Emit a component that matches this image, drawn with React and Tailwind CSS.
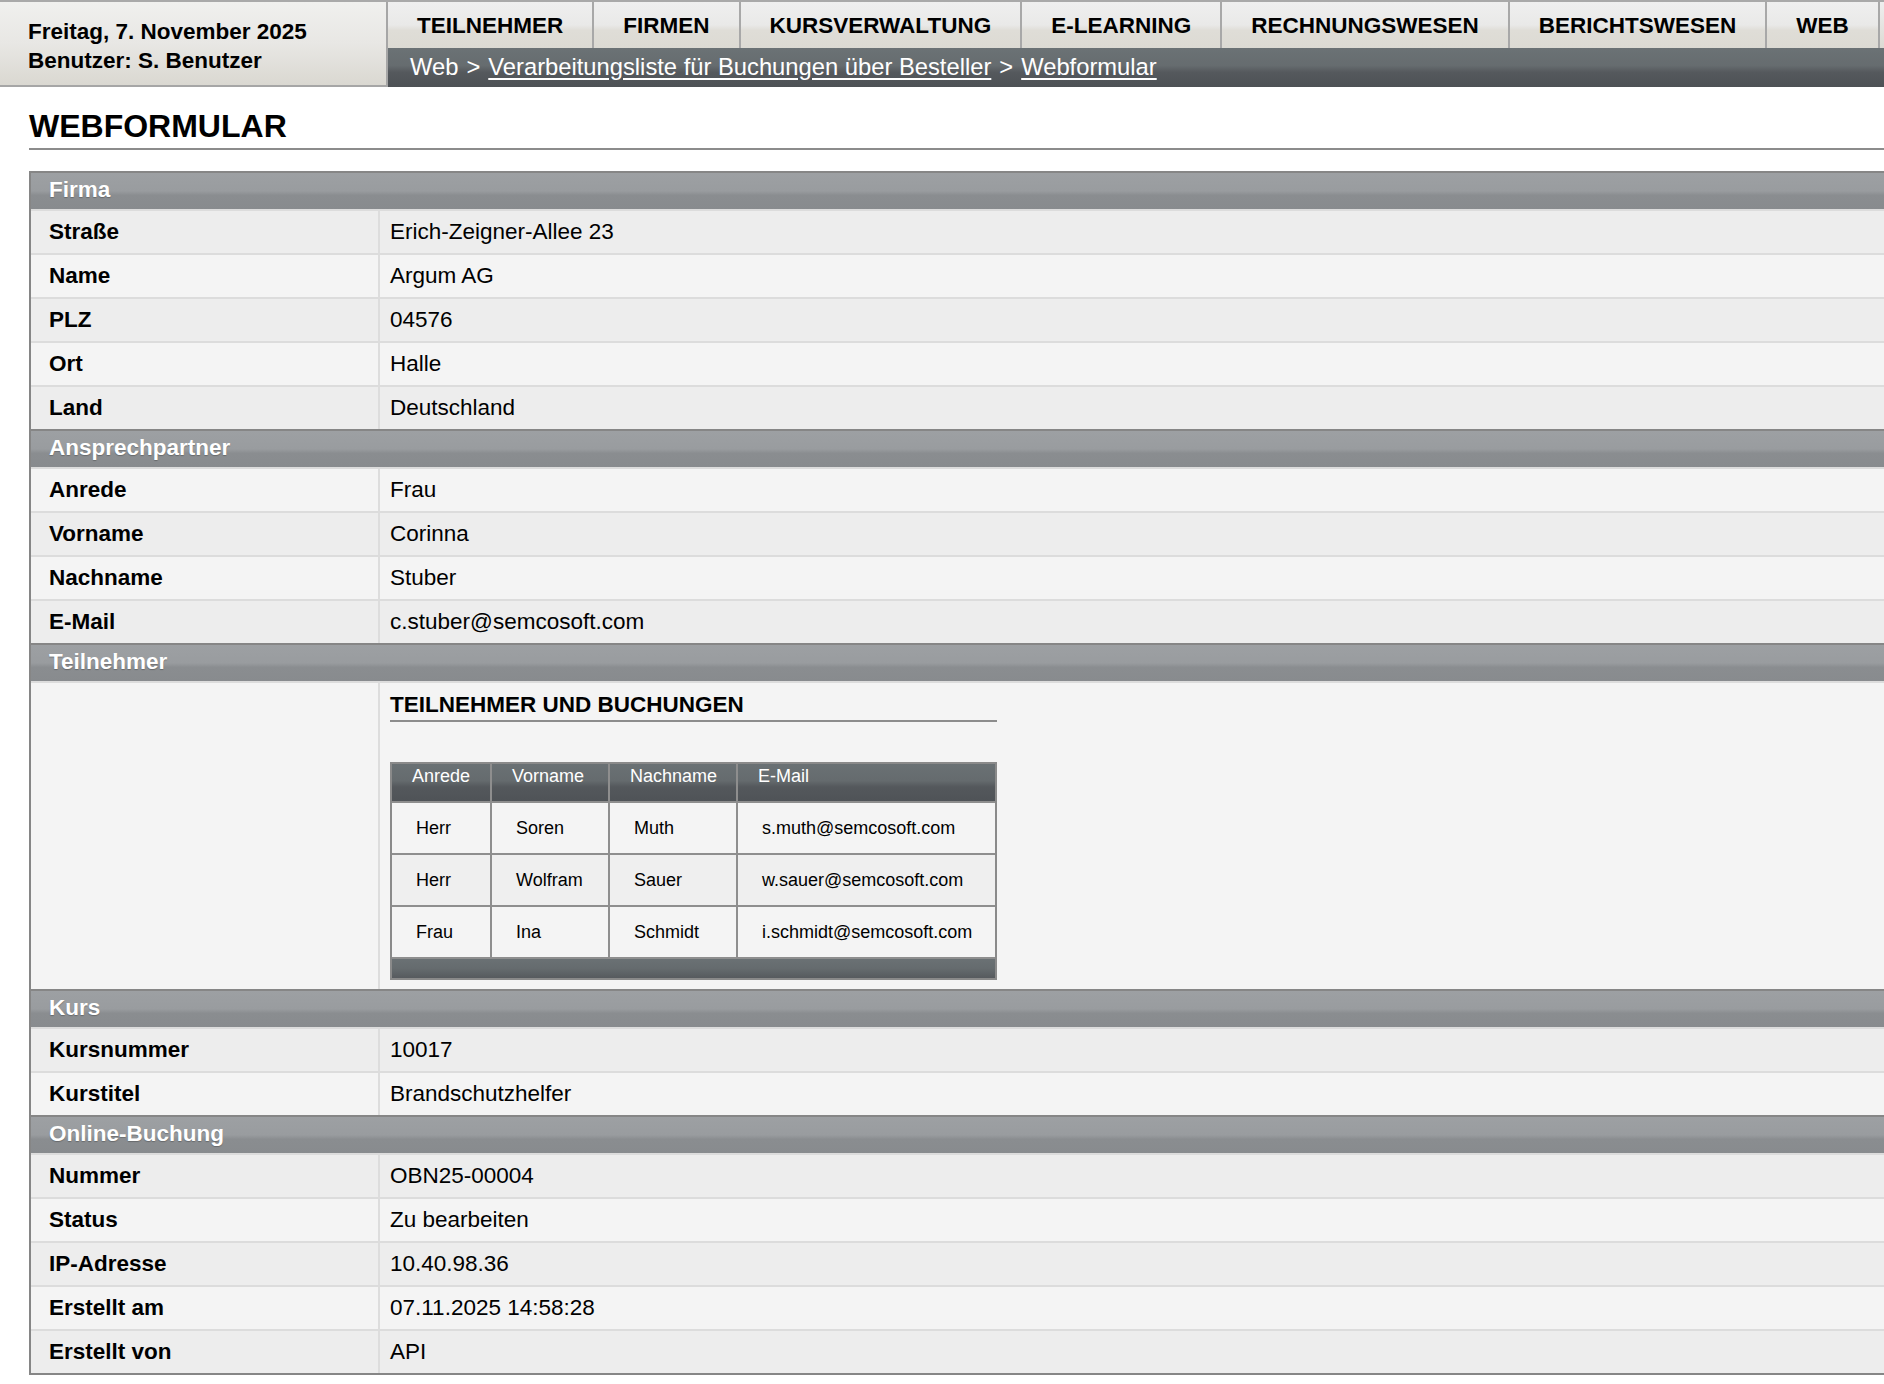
import React from "react";

const tabs = ["TEILNEHMER", "FIRMEN", "KURSVERWALTUNG", "E-LEARNING", "RECHNUNGSWESEN", "BERICHTSWESEN", "WEB"];

const sections = [
  {
    title: "Firma",
    rows: [
      ["Straße", "Erich-Zeigner-Allee 23"],
      ["Name", "Argum AG"],
      ["PLZ", "04576"],
      ["Ort", "Halle"],
      ["Land", "Deutschland"],
    ],
  },
  {
    title: "Ansprechpartner",
    rows: [
      ["Anrede", "Frau"],
      ["Vorname", "Corinna"],
      ["Nachname", "Stuber"],
      ["E-Mail", "c.stuber@semcosoft.com"],
    ],
  },
  { title: "Teilnehmer", special: true },
  {
    title: "Kurs",
    rows: [
      ["Kursnummer", "10017"],
      ["Kurstitel", "Brandschutzhelfer"],
    ],
  },
  {
    title: "Online-Buchung",
    rows: [
      ["Nummer", "OBN25-00004"],
      ["Status", "Zu bearbeiten"],
      ["IP-Adresse", "10.40.98.36"],
      ["Erstellt am", "07.11.2025 14:58:28"],
      ["Erstellt von", "API"],
    ],
  },
];

const people = [
  ["Herr", "Soren", "Muth", "s.muth@semcosoft.com"],
  ["Herr", "Wolfram", "Sauer", "w.sauer@semcosoft.com"],
  ["Frau", "Ina", "Schmidt", "i.schmidt@semcosoft.com"],
];

function SectionHeader({ title }) {
  return (
    <div className="h-[38px] border-t-2 border-[#868686] bg-[linear-gradient(to_bottom,#9da0a3_0%,#999c9f_50%,#8a8d90_62%,#888b8e_100%)] flex items-center pl-[18px] pb-[2px] text-white font-bold text-[22.5px] leading-none [text-shadow:0_1px_1px_rgba(0,0,0,0.25)]">
      {title}
    </div>
  );
}

function DataRow({ label, value, dark }) {
  return (
    <div className={`grid grid-cols-[349px_1fr] h-[44px] border-t-2 border-[#dcdcdc] ${dark ? "bg-[#ededed]" : "bg-[#f4f4f4]"}`}>
      <div className="flex items-center pl-[18px] font-bold text-[22.5px] border-r-2 border-[#dddddd]">{label}</div>
      <div className="flex items-center pl-[10px] text-[22.5px]">{value}</div>
    </div>
  );
}

function ParticipantsBlock() {
  const cols = "grid grid-cols-[100px_118px_128px_1fr]";
  return (
    <div className="grid grid-cols-[349px_1fr] h-[308px] border-t-2 border-[#dcdcdc] bg-[#f4f4f4]">
      <div className="border-r-2 border-[#dddddd]"></div>
      <div className="pl-[10px] pt-[9px]">
        <div className="w-[607px]">
          <div className="font-bold text-[22.5px] leading-[26px] pb-[2px] border-b-2 border-[#8c8c8c]">
            TEILNEHMER UND BUCHUNGEN
          </div>
          <div className="mt-[40px] border-2 border-[#8a8a8a] text-[18px]">
            <div className={`${cols} h-[37px] bg-[linear-gradient(to_bottom,#6a7174_0%,#656b6e_45%,#54585c_62%,#4f5357_100%)] text-white`}>
              {["Anrede", "Vorname", "Nachname", "E-Mail"].map((h, i) => (
                <div key={h} className={`pl-[20px] pt-[1px] leading-[22px] ${i < 3 ? "border-r-2 border-[#8e8e8e]" : ""}`}>
                  {h}
                </div>
              ))}
            </div>
            {people.map((p, r) => (
              <div key={r} className={`${cols} h-[52px] border-t-2 border-[#8e8e8e] ${r === 1 ? "bg-[#efefef]" : "bg-[#f4f4f4]"}`}>
                {p.map((c, i) => (
                  <div key={i} className={`flex items-center pl-[24px] ${i < 3 ? "border-r-2 border-[#8e8e8e]" : ""}`}>
                    {c}
                  </div>
                ))}
              </div>
            ))}
            <div className="h-[21px] border-t-2 border-[#8e8e8e] bg-[linear-gradient(to_bottom,#6a7174_0%,#656b6e_50%,#565a5e_100%)]"></div>
          </div>
        </div>
      </div>
    </div>
  );
}

export default function App() {
  let rowIndex = 0;
  return (
    <div className="w-[1884px] min-h-[1384px] bg-white overflow-hidden font-['Liberation_Sans',Arial,Helvetica,sans-serif] text-black">
      {/* Header */}
      <div className="flex h-[87px] border-t-2 border-[#a9a9a9]">
        <div className="w-[388px] shrink-0 bg-[linear-gradient(to_bottom,#f0f0ee_0%,#e8e7e4_50%,#dad8d1_100%)] border-r-2 border-b-2 border-[#a6a6a6] pl-[28px] pt-[4px] flex flex-col justify-center font-bold text-[22.5px] leading-[29px]">
          <div>Freitag, 7. November 2025</div>
          <div>Benutzer: S. Benutzer</div>
        </div>
        <div className="flex-1 min-w-0 flex flex-col">
          <div className="flex h-[46px] overflow-hidden">
            {tabs.map((t) => (
              <div
                key={t}
                className="shrink-0 px-[29px] pt-[1px] border-r-2 border-[#a8a8a8] bg-[linear-gradient(to_bottom,#efefef_0%,#e9e9e8_50%,#dfddd7_62%,#dcdad3_100%)] flex items-center font-bold text-[22.5px] whitespace-nowrap"
              >
                {t}
              </div>
            ))}
            <div className="flex-1 bg-[linear-gradient(to_bottom,#efefef_0%,#dcdad3_100%)]"></div>
          </div>
          <div className="h-[39px] bg-[linear-gradient(to_bottom,#6b7275_0%,#666c6f_45%,#55595d_62%,#4d5155_100%)] flex items-center pl-[22px] pb-[2px] text-white text-[23.75px] whitespace-nowrap">
            <span>Web</span>
            <span className="mx-[8px]">&gt;</span>
            <span className="underline underline-offset-[3px]">Verarbeitungsliste für Buchungen über Besteller</span>
            <span className="mx-[8px]">&gt;</span>
            <span className="underline underline-offset-[3px]">Webformular</span>
          </div>
        </div>
      </div>

      {/* Title */}
      <div className="ml-[29px] pt-[21px]">
        <h1 className="font-bold text-[32px] leading-[36px] pb-[4px] border-b-2 border-[#8c8c8c]">WEBFORMULAR</h1>
      </div>

      {/* Form table */}
      <div className="ml-[29px] mt-[21px] border-l-2 border-b-2 border-[#868686]">
        {sections.map((s) => (
          <div key={s.title}>
            <SectionHeader title={s.title} />
            {s.special ? (
              (() => {
                rowIndex++;
                return <ParticipantsBlock />;
              })()
            ) : (
              s.rows.map(([l, v]) => {
                const dark = rowIndex % 2 === 0;
                rowIndex++;
                return <DataRow key={l} label={l} value={v} dark={dark} />;
              })
            )}
          </div>
        ))}
      </div>
    </div>
  );
}
